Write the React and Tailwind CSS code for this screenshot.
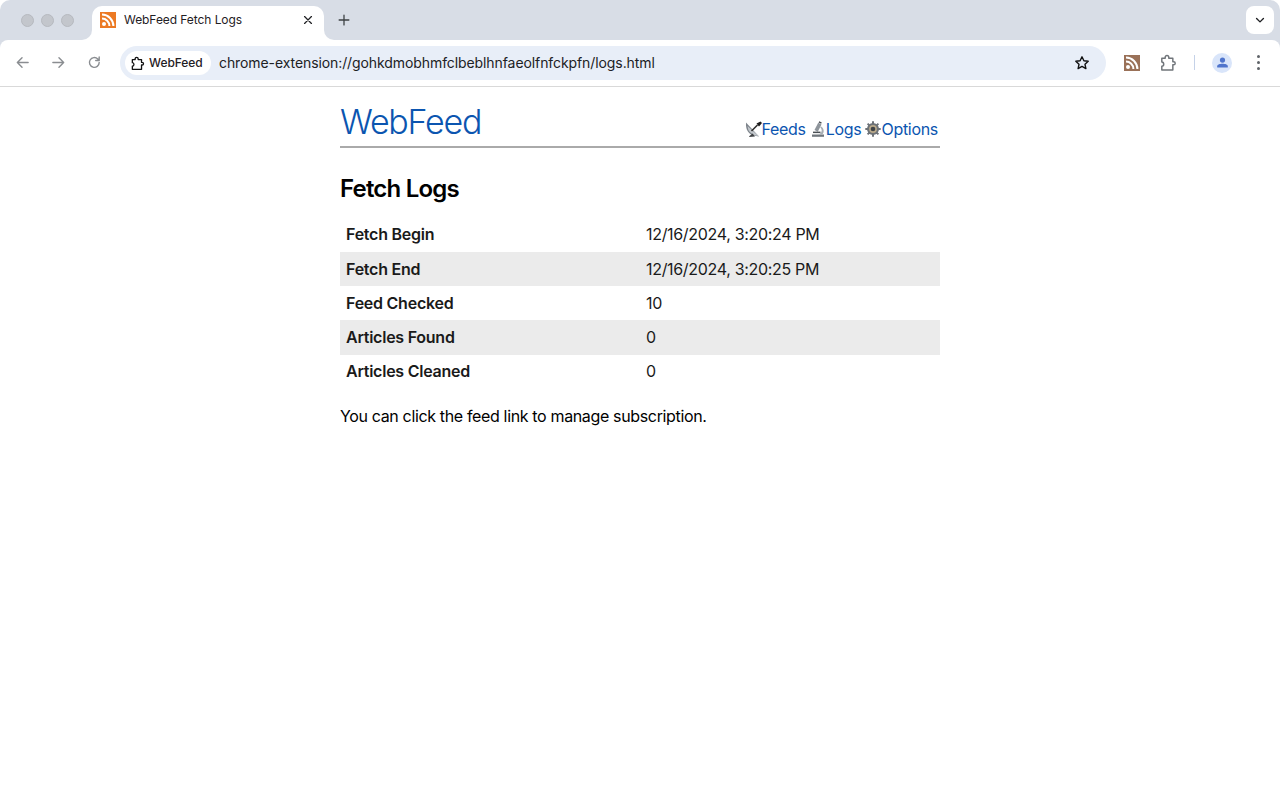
import React from "react";

const Rss = ({ bg, className }) => (
  <svg viewBox="0 0 16 16" className={className}>
    <rect width="16" height="16" fill={bg} />
    <circle cx="4" cy="12" r="2" fill="#fff" />
    <path d="M2 6.6a7.4 7.4 0 0 1 7.4 7.4" fill="none" stroke="#fff" strokeWidth="2" />
    <path d="M2 2.6A11.4 11.4 0 0 1 13.4 14" fill="none" stroke="#fff" strokeWidth="2" />
  </svg>
);

const Stroke = ({ className, children, w = 1.5, color = "#5f6368" }) => (
  <svg viewBox="0 0 16 16" className={className} fill="none" stroke={color} strokeWidth={w} strokeLinecap="round" strokeLinejoin="round">
    {children}
  </svg>
);

const Puzzle = ({ className, color, w = 1.3 }) => (
  <Stroke className={className} color={color} w={w}>
    <path d="M2.5 3.8H5.5V3a1.6 1.6 0 0 1 3.2 0v.8h3.6V6.8h.7a1.4 1.4 0 0 1 0 2.800h-.7v4.600H2.500v-3.300c1.300-.1 1.700-.9 1.700-1.900s-.4-1.800-1.700-1.900Z" />
  </Stroke>
);

const Satellite = () => (
  <svg viewBox="0 0 16 16" className="w-[16px] h-[16px] shrink-0">
    <path d="M0 1.500Q-1 15 13 15.500Z" fill="#7e858c" />
    <path d="M1.500 5Q2 13 11 14.800L13 15.500Z" fill="#c2c7cc" />
    <path d="M5.500 10L11.500 4" stroke="#2e2e2e" strokeWidth="1.600" />
    <path d="M10.500 2.500L14.500 .5L16 2L13 5.500Z" fill="#1c1c1c" />
    <path d="M3.500 15L6.500 12.500L9 15.500L3 16Z" fill="#3f4245" />
  </svg>
);

const Microscope = () => (
  <svg viewBox="0 0 16 16" className="w-[16px] h-[16px] shrink-0">
    <path d="M2 15.800h12v-2.300H2Z" fill="#70767c" />
    <path d="M8.200 1.800l3.300 1.700-3.700 7.200-3.300-1.700Z" fill="#8e959b" />
    <path d="M9.300.2l2.500 1.300-.7 1.300-2.500-1.300Z" fill="#454a4f" />
    <path d="M3 10.600h7.500v1.500H3Z" fill="#4b5055" />
    <path d="M11 5.500c3 1.600 3.800 5.800 1 8.300H6.500c2.500 0 5-1.300 5.200-4 .1-1.500-.6-2.600-1.500-3.200Z" fill="#a7adb3" />
  </svg>
);

const Gear = () => (
  <svg viewBox="0 0 16 16" className="w-[16px] h-[16px] shrink-0">
    <circle cx="8" cy="8" r="6" fill="#6d7277" />
    <g stroke="#6d7277" strokeWidth="2">
      <path d="M8 .3v15.400M.3 8h15.400M2.600 2.600l10.800 10.800M13.400 2.600L2.600 13.400" />
    </g>
    <circle cx="8" cy="8" r="3.900" fill="#b9a98a" />
    <circle cx="8" cy="8" r="2.300" fill="#3f4347" />
  </svg>
);

const rows = [
  ["Fetch Begin", "12/16/2024, 3:20:24 PM"],
  ["Fetch End", "12/16/2024, 3:20:25 PM"],
  ["Feed Checked", "10"],
  ["Articles Found", "0"],
  ["Articles Cleaned", "0"],
];

function NavLink({ icon, label }) {
  return (
    <a className="flex items-center text-[#0b55b0] text-[16px] leading-[20px] tracking-[-0.3px]">
      {icon}
      <span>{label}</span>
    </a>
  );
}

export default function App() {
  return (
    <div className="h-[800px] w-[1280px] overflow-hidden bg-white flex flex-col font-['Inter','Liberation_Sans',sans-serif] text-black">
      <div className="bg-[#d8dde6] shrink-0">
        {/* Tab strip */}
        <div className="h-[40px] bg-white flex">
          <div className="w-[92px] h-full bg-[#d8dde6] rounded-tl-[10px] rounded-br-[10px] flex items-center pl-[21px] gap-[7px]">
            <span className="w-[13px] h-[13px] rounded-full bg-[#c3c6cc] border border-[#b6b9bf]" />
            <span className="w-[13px] h-[13px] rounded-full bg-[#c3c6cc] border border-[#b6b9bf]" />
            <span className="w-[13px] h-[13px] rounded-full bg-[#c3c6cc] border border-[#b6b9bf]" />
          </div>
          <div className="w-[232px] h-full bg-[#d8dde6] flex items-end">
            <div className="w-full h-[34px] bg-white rounded-t-[10px] flex items-center pl-[8px] pr-[11px] pb-[6px]">
              <Rss bg="#ec7a24" className="w-[16px] h-[16px] shrink-0" />
              <span className="ml-[8px] text-[12px] tracking-[-0.07px] text-[#1f2024] flex-1">WebFeed Fetch Logs</span>
              <Stroke className="w-[10px] h-[10px]" color="#202124" w={2}>
                <path d="M2.500 2.500l11 11M13.500 2.500l-11 11" />
              </Stroke>
            </div>
          </div>
          <div className="flex-1 h-full bg-[#d8dde6] rounded-bl-[10px] rounded-tr-[10px] flex items-center pl-[14px]">
            <Stroke className="w-[12px] h-[12px]" color="#3c4043" w={1.700}>
              <path d="M8 1.500v13M1.500 8h13" />
            </Stroke>
            <div className="ml-auto mr-[6px] w-[28px] h-[28px] rounded-[8px] bg-white flex items-center justify-center">
              <Stroke className="w-[10px] h-[10px]" color="#202124" w={2.200}>
                <path d="M2.500 5.500L8 11l5.500-5.500" />
              </Stroke>
            </div>
          </div>
        </div>

        {/* Toolbar */}
        <div className="h-[47px] bg-white rounded-t-[8px] border-b border-[#d9d9d9] flex items-center">
          <div className="w-[120px] flex items-center pl-[15px] gap-[21px] shrink-0 -mt-[1px]">
            <Stroke className="w-[15px] h-[15px]" color="#8a8d91">
              <path d="M14 8H2.500M7.500 3L2.500 8l5 5" />
            </Stroke>
            <Stroke className="w-[15px] h-[15px]" color="#8a8d91">
              <path d="M2 8h11.500M8.500 3l5 5-5 5" />
            </Stroke>
            <Stroke className="w-[15px] h-[15px]" color="#8a8d91">
              <path d="M13 8a5.200 5.200 0 1 1-1.500-3.700L13 5.800M13 2v3.800H9.300" />
            </Stroke>
          </div>
          <div className="w-[986px] h-[34px] rounded-full bg-[#e8eef8] flex items-center pl-[5px] pr-[16px] shrink-0">
            <div className="h-[24px] w-[86px] rounded-full bg-white flex items-center pl-[5px] gap-[4px]">
              <Puzzle className="w-[15px] h-[15px] shrink-0" color="#111" w={1.400} />
              <span className="text-[12px] font-medium text-[#1f2024] leading-[22px] pb-[1px] tracking-[-0.05px]">WebFeed</span>
            </div>
            <span className="ml-[8px] text-[14px] leading-[20px] pb-[1px] tracking-[-0.09px] text-[#202124]">chrome-extension://gohkdmobhmfclbeblhnfaeolfnfckpfn/logs.html</span>
            <Stroke className="ml-auto w-[16px] h-[16px]" color="#111" w={1.400}>
              <path d="M8 1.800l1.900 4 4.300.5-3.200 3 .9 4.300L8 11.400l-3.900 2.200.9-4.300-3.200-3 4.300-.5Z" />
            </Stroke>
          </div>
          <div className="flex items-center flex-1 pl-[18px] -mt-[1px]">
            <Rss bg="#9a7158" className="w-[16px] h-[16px] shrink-0" />
            <Puzzle className="ml-[19px] w-[18px] h-[18px] shrink-0" color="#70757a" />
            <span className="ml-[17px] w-[1px] h-[15px] bg-[#c5d2e8]" />
            <span className="ml-[17px] w-[20px] h-[20px] rounded-full bg-[#d9e5fa] flex items-center justify-center">
              <svg viewBox="0 0 16 16" className="w-[13px] h-[13px]" fill="#4f74cc">
                <circle cx="8" cy="5" r="3.200" />
                <path d="M1.500 14v-1.500C1.500 10.500 5 9.500 8 9.500s6.500 1 6.500 3V14Z" />
              </svg>
            </span>
            <span className="ml-[25px] flex flex-col gap-[3px]">
              <span className="w-[3px] h-[3px] rounded-full bg-[#5f6368]" />
              <span className="w-[3px] h-[3px] rounded-full bg-[#5f6368]" />
              <span className="w-[3px] h-[3px] rounded-full bg-[#5f6368]" />
            </span>
          </div>
        </div>
      </div>

      {/* Page */}
      <div className="w-[600px] mx-auto">
        <header className="h-[61px] flex items-end justify-between border-b-2 border-[#aaaaaa] pb-[7px]">
          <h1 className="text-[34px] leading-[42px] font-light text-[#0b55b0] -mb-[4px] tracking-[-1.25px]">WebFeed</h1>
          <nav className="flex items-center gap-[4px] pr-[2px]">
            <NavLink icon={<Satellite />} label="Feeds" />
            <NavLink icon={<Microscope />} label="Logs" />
            <NavLink icon={<Gear />} label="Options" />
          </nav>
        </header>
        <h2 className="mt-[26px] text-[24px] leading-[30px] font-semibold tracking-[-0.8px]">Fetch Logs</h2>
        <div className="mt-[13.700px] flex flex-col">
          {rows.map(([k, v], i) => (
            <div key={k} className={`h-[34.250px] pb-[1px] flex items-center text-[16px] ${i % 2 ? "bg-[#ebebeb]" : ""}`}>
              <div className="w-[300px] pl-[6px] font-semibold text-[#1a1a1a] tracking-[-0.25px]">{k}</div>
              <div className="pl-[6px] text-[#1a1a1a] tracking-[-0.32px]">{v}</div>
            </div>
          ))}
        </div>
        <p className="mt-[15px] text-[16px] leading-[24px] tracking-[-0.35px]">You can click the feed link to manage subscription.</p>
      </div>
    </div>
  );
}
